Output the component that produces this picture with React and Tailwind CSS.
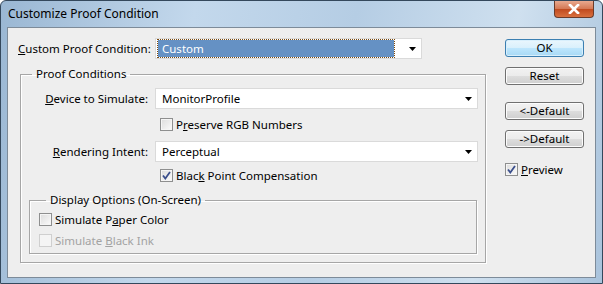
const font = { fontFamily: '"Noto Sans", "Open Sans", sans-serif' }

function Caret() {
  return (
    <svg width="7" height="4" viewBox="0 0 7 4" className="shrink-0">
      <path d="M0 0h7L3.5 4z" fill="#000" />
    </svg>
  )
}

function Combo({ value, width, selected }) {
  return (
    <div className={`h-[21px] ${width} shrink-0 bg-white border border-[#dadada] flex items-center pr-[5px]`}>
      {selected ? (
        <div className="flex-1 h-[17px] ml-[2px] mr-[15px] bg-[#6591c4] outline-1 outline-dotted outline-[#7a4a10] text-white pl-[4px] leading-[17px]">
          {value}
        </div>
      ) : (
        <div className="flex-1 pl-[6px] text-black">{value}</div>
      )}
      <Caret />
    </div>
  )
}

function Check({ checked, disabled, children }) {
  return (
    <div className={`flex items-center h-[13px] gap-[3px] whitespace-nowrap ${disabled ? 'text-[#a3a3a3]' : 'text-black'}`}>
      <div
        className={`w-[13px] h-[13px] shrink-0 border flex items-center justify-center ${
          disabled
            ? 'border-[#cfcfcf] bg-[#f4f4f4]'
            : 'border-[#8e8f8f] bg-[linear-gradient(135deg,#dcdcdc,#fbfbfb)] shadow-[inset_0_0_0_1px_#f5f5f5]'
        }`}
      >
        {checked && (
          <svg width="9" height="9" viewBox="0 0 9 9">
            <path d="M1 4.5l2.3 3L8 1" fill="none" stroke="#3b4f8c" strokeWidth="1.8" />
          </svg>
        )}
      </div>
      <span className="leading-[13px]">{children}</span>
    </div>
  )
}

function Btn({ children, primary }) {
  return (
    <div
      className={`w-[79px] h-[18px] rounded-[3px] border flex items-center justify-center leading-none ${
        primary
          ? 'border-[#3c7fb1] bg-[linear-gradient(#eaf6fd_0%,#d9f0fc_50%,#bee6fd_51%,#a7d9f5_100%)] shadow-[inset_0_0_0_1px_#d8effc]'
          : 'border-[#707070] bg-[linear-gradient(#f2f2f2_0%,#ebebeb_50%,#dddddd_51%,#cfcfcf_100%)] shadow-[inset_0_0_0_1px_#fcfcfc]'
      }`}
    >
      {children}
    </div>
  )
}

export default function App() {
  return (
    <div
      style={font}
      className="w-[603px] h-[284px] flex flex-col text-[11.5px] text-black bg-[linear-gradient(100deg,#9ab7d3_0%,#c3d8ec_30%,#b5cde4_55%,#cfe0ef_80%,#a9c3dc_100%)] border border-[#34485c] rounded-t-[6px] overflow-hidden"
    >
      <div className="h-[26px] flex items-start justify-between pl-[7px] pr-[8px]">
        <span className="mt-[4px] text-[12px]">Customize Proof Condition</span>
        <div className="w-[40px] h-[17px] rounded-b-[4px] border border-t-0 border-[#6b3b2a] bg-[linear-gradient(#e9a98f_0%,#d47753_50%,#c04a1f_51%,#d9703f_100%)] flex items-center justify-center">
          <svg width="12" height="10" viewBox="0 0 12 10">
            <path d="M2 1l8 8M10 1l-8 8" stroke="#fff" strokeWidth="2.6" strokeLinecap="square" />
          </svg>
        </div>
      </div>
      <div className="flex-1 mx-[6px] mb-[5px] bg-[#eeeeee] border border-[#7d8b99] flex">
        <div className="w-[488px] shrink-0 flex flex-col">
          <div className="mt-[10px] ml-[10px] h-[21px] flex items-center">
            <span className="w-[137px] shrink-0 whitespace-nowrap"><span className="underline">C</span>ustom Proof Condition:</span>
            <Combo value="Custom" width="w-[267px]" selected />
          </div>

          <fieldset className="mt-[7px] ml-[12px] w-[466px] border border-[#a6a6a6] shadow-[inset_1px_1px_0_#fff,1px_1px_0_#fff] pb-[8px] min-w-0">
            <legend className="ml-[11px] px-[4px] leading-[16px]">Proof Conditions</legend>
            <div className="pt-[6px] flex items-center">
              <span className="w-[134px] shrink-0 whitespace-nowrap text-right pr-[7px]"><span className="underline">D</span>evice to Simulate:</span>
              <Combo value="MonitorProfile" width="w-[323px]" />
            </div>
            <div className="mt-[9px] ml-[139px]">
              <Check>P<span className="underline">r</span>eserve RGB Numbers</Check>
            </div>
            <div className="mt-[10px] flex items-center">
              <span className="w-[134px] shrink-0 whitespace-nowrap text-right pr-[7px]"><span className="underline">R</span>endering Intent:</span>
              <Combo value="Perceptual" width="w-[323px]" />
            </div>
            <div className="mt-[7px] ml-[139px]">
              <Check checked>Blac<span className="underline">k</span> Point Compensation</Check>
            </div>

            <fieldset className="mt-[10px] ml-[8px] w-[448px] border border-[#a6a6a6] shadow-[inset_1px_1px_0_#fff,1px_1px_0_#fff] pb-[6px] pl-[9px] min-w-0">
              <legend className="ml-[7px] px-[4px] leading-[16px]">Display Options (On-Screen)</legend>
              <div className="pt-[5px]">
                <Check>Simulate P<span className="underline">a</span>per Color</Check>
              </div>
              <div className="mt-[8px]">
                <Check disabled>Simulate <span className="underline">B</span>lack Ink</Check>
              </div>
            </fieldset>
          </fieldset>
        </div>

        <div className="flex flex-col ml-[9px] pt-[11px]">
          <Btn primary>OK</Btn>
          <div className="mt-[10px]"><Btn>Reset</Btn></div>
          <div className="mt-[17px]"><Btn>&lt;-Default</Btn></div>
          <div className="mt-[10px]"><Btn>-&gt;Default</Btn></div>
          <div className="mt-[15px]">
            <Check checked><span className="underline">P</span>review</Check>
          </div>
        </div>
      </div>
    </div>
  )
}
